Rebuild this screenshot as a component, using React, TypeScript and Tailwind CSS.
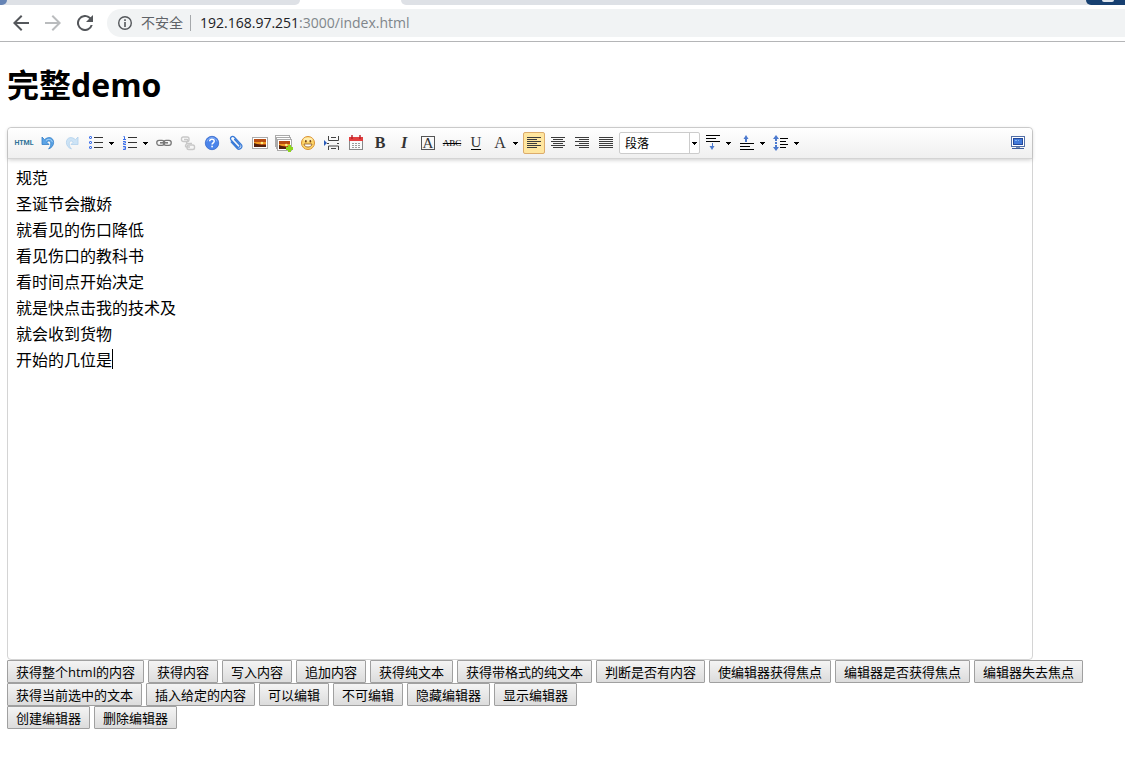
import React from "react";

const iconClass = "block h-4 w-4 shrink-0";

function Svg({ children, className = iconClass, viewBox = "0 0 16 16" }: { children: React.ReactNode; className?: string; viewBox?: string }) {
  return (
    <svg className={className} viewBox={viewBox} fill="none" aria-hidden="true">
      {children}
    </svg>
  );
}

function Caret() {
  return (
    <svg className="block h-[3px] w-[5px] shrink-0" viewBox="0 0 5 3" aria-hidden="true">
      <path d="M0 0h5v1H4v1H3v1H2V2H1V1H0z" fill="#000" />
    </svg>
  );
}

function Tool({ label, active = false, children }: { label: string; active?: boolean; children: React.ReactNode }) {
  return (
    <button type="button" title={label} aria-label={label} className="flex h-[22px] w-6 shrink-0 items-center justify-center">
      {active ? (
        <span className="flex h-[22px] w-[22px] items-center justify-center rounded-[2px] border border-[#dcac6c] bg-[#ffe69f]">{children}</span>
      ) : (
        children
      )}
    </button>
  );
}

function MenuTool({ label, children }: { label: string; children: React.ReactNode }) {
  return (
    <button type="button" title={label} aria-label={label} aria-haspopup="menu" className="flex h-[22px] w-[34px] shrink-0 items-center justify-between pl-1 pr-1">
      {children}
      <Caret />
    </button>
  );
}

function Lines({ rows }: { rows: [number, number][] }) {
  return (
    <Svg>
      {rows.map(([x, w], i) => (
        <rect key={i} x={x} y={2 + i * 2} width={w} height="1" fill="#3c3c3c" />
      ))}
    </Svg>
  );
}

const LEFT: [number, number][] = [[1, 14], [1, 10], [1, 14], [1, 10], [1, 14], [1, 10]];
const CENTER: [number, number][] = [[1, 14], [3, 10], [1, 14], [3, 10], [1, 14], [3, 10]];
const RIGHT: [number, number][] = [[1, 14], [5, 10], [1, 14], [5, 10], [1, 14], [5, 10]];
const JUSTIFY: [number, number][] = [[1, 14], [1, 14], [1, 14], [1, 14], [1, 14], [1, 14]];

function UndoIcon() {
  return (
    <Svg>
      <path d="M2 2v7.5h7L6.8 7.2C8.6 5 11 6 10.8 9c-.1 2-1 3.5-2.2 5 3.2-1.3 5-3.7 5-6.6 0-5.2-5.7-6.3-9-2.7z" fill="#5ca4e6" stroke="#347fc8" strokeWidth=".8" />
      <path d="M6 5.6c2.4-2.2 5.6-1.4 6.3 1.3" stroke="#a9d4f8" strokeWidth="1" />
    </Svg>
  );
}

function RedoIcon() {
  return (
    <Svg>
      <path d="M14 2v7.5H7l2.2-2.3C7.4 5 5 6 5.2 9c.1 2 1 3.500 2.200 5-3.200-1.300-5-3.700-5-6.600 0-5.200 5.700-6.300 9-2.700z" fill="#cde3f5" stroke="#b1d1ec" strokeWidth=".8" />
    </Svg>
  );
}

function BulletIcon() {
  return (
    <Svg>
      {[1.5, 6.5, 11.5].map((y) => (
        <g key={y}>
          <rect x="1.5" y={y} width="2" height="2" rx=".5" stroke="#3d70ea" />
          <rect x="6" y={y + 0.5} width="9" height="1" fill="#333" />
        </g>
      ))}
    </Svg>
  );
}

function NumberIcon() {
  return (
    <Svg>
      <path d="M1.5 1.500h1v3M1 4.500h3M1 6.500h2.500v1.500h-2v1.500H4M1 11.500h2.500v3H1M1.500 13H3.500" stroke="#3d70ea" />
      <path d="M6 2.500h9M6 7.500h9M6 12.500h9" stroke="#333" />
    </Svg>
  );
}

function LinkIcon() {
  return (
    <Svg>
      <rect x=".8" y="5.3" width="7.4" height="5" rx="2.2" stroke="#767676" strokeWidth="1.3" />
      <rect x="7.8" y="5.3" width="7.4" height="5" rx="2.2" stroke="#767676" strokeWidth="1.3" />
      <path d="M4 7.800h8" stroke="#767676" strokeWidth="1.5" />
    </Svg>
  );
}

function UnlinkIcon() {
  return (
    <Svg>
      <rect x="1.5" y="2" width="7.500" height="4.500" rx="1.800" stroke="#c8c8c8" strokeWidth="1.400" />
      <rect x="7" y="10" width="7.500" height="4.500" rx="1.800" stroke="#c8c8c8" strokeWidth="1.400" />
      <path d="M4 4.500h3c2 0 0 3-1 3.500M10 12H6.500c-2 0-1-3.500 1.500-3.500h4" stroke="#c8c8c8" strokeWidth="1.300" />
    </Svg>
  );
}

function HelpIcon() {
  return (
    <Svg>
      <circle cx="8" cy="8" r="6.7" fill="#4b84ea" stroke="#3568ca" strokeWidth=".8" />
      <path d="M3 6.500C4 1.500 12 1.500 13 6.500" stroke="#89b1f6" />
      <path d="M5.700 6.300C5.700 3.400 10.300 3.500 10.200 6.200c0 1.600-2.100 1.600-2.100 3.300" stroke="#fff" strokeWidth="1.5" />
      <rect x="7.3" y="10.7" width="1.6" height="1.6" fill="#fff" />
    </Svg>
  );
}

function ClipIcon() {
  return (
    <Svg>
      <g transform="rotate(-43 8 8)" stroke="#397bd8" strokeWidth="1.3" strokeLinecap="round">
        <path d="M5.200 4v8.500c0 3.700 5.600 3.700 5.600 0V2.700c0-3.200-4.400-3.200-4.400 0v9c0 2 3 2 3 0V4.500" />
      </g>
    </Svg>
  );
}

function Photo({ x, y, w, h }: { x: number; y: number; w: number; h: number }) {
  return (
    <g>
      <rect x={x + 0.5} y={y + 0.5} width={w - 1} height={h - 1} fill="#fff" stroke="#aaa" />
      <rect x={x + 2} y={y + 2} width={w - 4} height={h - 4} fill="#b74b12" />
      <rect x={x + 2} y={y + h / 2 - 1} width={w - 4} height="2" fill="#f29a22" />
      <circle cx={x + w * 0.62} cy={y + h / 2} r="1.3" fill="#ffec83" />
      <path d={`M${x + 2} ${y + h / 2}l3 1 4 1h${w - 11}v${h / 2 - 4}h${4 - w}z`} fill="#54200c" />
    </g>
  );
}

function ImageIcon() {
  return (
    <Svg>
      <Photo x={0} y={2} w={16} h={12} />
    </Svg>
  );
}

function ImagesIcon() {
  return (
    <Svg className="block h-[18px] w-5 shrink-0" viewBox="0 0 20 18">
      <rect x="1.5" y="1.5" width="14" height="11" fill="#fff" stroke="#aaa" />
      <rect x="2.5" y="3.5" width="14" height="11" fill="#fff" stroke="#aaa" />
      <Photo x={3} y={5} w={15} h={12} />
      <path d="M14 11h3v2h2v3h-2v2h-3v-2h-2v-3h2z" fill="#8ed51e" />
    </Svg>
  );
}

function SmileIcon() {
  return (
    <Svg>
      <circle cx="8" cy="8" r="6.5" fill="#fdd568" stroke="#d89033" />
      <ellipse cx="8" cy="4.5" rx="4.5" ry="2" fill="#ffecad" />
      <rect x="5" y="5" width="1.7" height="2.5" rx=".8" fill="#754219" />
      <rect x="9.5" y="5" width="1.7" height="2.5" rx=".8" fill="#754219" />
      <path d="M4 9h8c-.4 4-7.600 4-8 0z" fill="#fff" stroke="#8c5420" strokeWidth=".8" />
    </Svg>
  );
}

function PageBreakIcon() {
  return (
    <Svg>
      <path d="M0 5l3 3-3 3z" fill="#285ab8" />
      <path d="M4.500 1v4.500h10V1M7 2.500h5M3 8.500h2M13 8.500h2M4.500 15v-4h10v4M7 13.500h5" stroke="#444" />
    </Svg>
  );
}

function CalendarIcon() {
  return (
    <Svg>
      <rect x="1.5" y="2.5" width="13" height="12" fill="#fafafa" stroke="#888" />
      <path d="M1 2h14v4H1z" fill="#e23e3e" />
      <path d="M4 0v4M12 0v4" stroke="#b51f29" strokeWidth="1.4" />
      <path d="M4 8h2v1H4zM7 8h2v1H7zM10 8h2v1h-2zM4 10h2v1H4zM7 10h2v1H7zM10 10h2v1h-2zM4 12h2v1H4zM7 12h2v1H7zM10 12h2v1h-2z" fill="#9b9b9b" />
    </Svg>
  );
}

function SpaceBeforeIcon() {
  return (
    <Svg>
      <path d="M1 .5h14M1 3.500h10M1 6.500h14" stroke="#000" />
      <path d="M6 8h1v3H4.500L7 15l2.500-4H8V8z" fill="#4b79ce" />
    </Svg>
  );
}

function SpaceAfterIcon() {
  return (
    <Svg>
      <path d="M1 8.500h14M1 11.500h10M1 14.500h14" stroke="#000" />
      <path d="M7 0L4.500 4H6v3h2V4h1.500z" fill="#4b79ce" />
    </Svg>
  );
}

function LineHeightIcon() {
  return (
    <Svg>
      <path d="M3 0L0 4h2v2h2V4h2zM2 7h2v2H2zM3 16l-3-4h2v-2h2v2h2z" fill="#4b79ce" />
      <path d="M7 3.500h8M7 6.500h6M7 9.500h8M7 12.500h6" stroke="#000" />
    </Svg>
  );
}

function ScreenIcon() {
  return (
    <Svg>
      <rect x="1.5" y="1.5" width="13" height="10" fill="#fff" stroke="#526fa7" />
      <rect x="3.5" y="3.5" width="9" height="6" fill="#437ad9" stroke="#24499b" />
      <path d="M5 5h2v1H5zM8 5h1v1H8z" fill="#7fb2f4" />
      <path d="M6 12h4v1H6z" fill="#7b8fae" />
      <path d="M2 13h12v1H2z" fill="#3b5c9c" />
    </Svg>
  );
}

const PARAGRAPHS = ["规范", "圣诞节会撒娇", "就看见的伤口降低", "看见伤口的教科书", "看时间点开始决定", "就是快点击我的技术及", "就会收到货物", "开始的几位是"];

const ACTIONS = [
  "获得整个html的内容", "获得内容", "写入内容", "追加内容", "获得纯文本", "获得带格式的纯文本", "判断是否有内容", "使编辑器获得焦点",
  "编辑器是否获得焦点", "编辑器失去焦点", "获得当前选中的文本", "插入给定的内容", "可以编辑", "不可编辑", "隐藏编辑器", "显示编辑器",
];

function ActionButton({ children }: { children: React.ReactNode }) {
  return (
    <button type="button" className="h-[23px] whitespace-nowrap rounded-[1px] border border-[#a0a0a0] bg-linear-to-b from-[#f4f4f4] to-[#dcdcdc] px-2 text-[13px] leading-[20px] text-black">
      {children}
    </button>
  );
}

function BrowserBar() {
  return (
    <header className="border-b border-[#b4b5b7] bg-white">
      <div className="flex h-[5px] overflow-hidden bg-white">
        <div className="w-[300px] rounded-br-[5px] bg-[#dee1e6]">
          <div className="h-[5px] w-[7px] rounded-br-[5px] bg-[#6684b5]" />
        </div>
        <div className="w-[101px]" />
        <div className="flex flex-1 justify-end rounded-bl-[5px] bg-[#dee1e6]">
          <div className="flex w-[39px] justify-center rounded-bl-[5px] bg-[#174071] pl-1">
            <div className="h-[2px] w-3 rounded-b-full bg-[#dfe6ee]" />
          </div>
        </div>
      </div>
      <div className="flex h-9 items-center">
        <nav className="flex shrink-0 items-center gap-4 pl-[13px]">
          <button type="button" aria-label="后退">
            <Svg viewBox="4 4 16 16"><path d="M20 11H7.830l5.590-5.590L12 4l-8 8 8 8 1.410-1.410L7.830 13H20z" fill="#54575b" /></Svg>
          </button>
          <button type="button" aria-label="前进">
            <Svg viewBox="4 4 16 16"><path d="M4 13h12.170l-5.590 5.590L12 20l8-8-8-8-1.410 1.410L16.170 11H4z" fill="#babcbe" /></Svg>
          </button>
          <button type="button" aria-label="重新加载">
            <Svg viewBox="4 4 16 16"><path d="M17.650 6.350A8 8 0 1 0 19.730 14h-2.080A6 6 0 1 1 12 6c1.660 0 3.140.69 4.220 1.780L13 11h7V4z" fill="#54575b" /></Svg>
          </button>
        </nav>
        <div className="ml-[14px] flex h-7 flex-1 items-center rounded-l-full bg-[#f1f3f4] pl-[10px] text-[14px] leading-[20px]">
          <button type="button" className="flex items-center gap-2 text-[#5f6368]">
            <Svg>
              <circle cx="8" cy="8" r="6.3" stroke="#54575b" strokeWidth="1.4" />
              <path d="M7.200 4.300h1.600v1.600H7.200zM7.200 7h1.600v5H7.200z" fill="#54575b" />
            </Svg>
            不安全
          </button>
          <span className="ml-[7px] h-4 w-px bg-[#a5a8ab]" />
          <div role="textbox" aria-label="地址" className="ml-[9px] text-[#80868b]">
            <span className="text-[#202124]">192.168.97.251</span>:3000/index.html
          </div>
        </div>
      </div>
    </header>
  );
}

export default function App() {
  return (
    <div className="min-h-screen bg-white font-['Open_Sans','Noto_Sans_CJK_SC',sans-serif] text-black">
      <BrowserBar />
      <main className="px-[7px] pb-8 pt-[21px]">
        <h1 className="mb-[21px] text-[32px] font-bold leading-[43px]">完整demo</h1>

        <section aria-label="编辑器" className="w-full max-w-[1026px] rounded-[4px] border border-[#d4d4d4]">
          <div role="toolbar" aria-label="格式" className="flex items-center rounded-t-[4px] border-b border-[#d4d4d4] bg-linear-to-b from-white to-[#f0f0f0] py-1 pl-1 pr-[2px] font-['Liberation_Serif',serif] text-[#333] shadow-[0_1px_4px_rgba(0,0,0,0.2)]">
            <Tool label="源代码"><span className="font-['Roboto',sans-serif] text-[7px] font-bold leading-[8px] text-[#2f7297]">HTML</span></Tool>
            <Tool label="撤销"><UndoIcon /></Tool>
            <Tool label="重做"><RedoIcon /></Tool>
            <MenuTool label="无序列表"><BulletIcon /></MenuTool>
            <MenuTool label="有序列表"><NumberIcon /></MenuTool>
            <Tool label="超链接"><LinkIcon /></Tool>
            <Tool label="取消链接"><UnlinkIcon /></Tool>
            <Tool label="帮助"><HelpIcon /></Tool>
            <Tool label="附件"><ClipIcon /></Tool>
            <Tool label="单图上传"><ImageIcon /></Tool>
            <Tool label="多图上传"><ImagesIcon /></Tool>
            <Tool label="表情"><SmileIcon /></Tool>
            <Tool label="分页"><PageBreakIcon /></Tool>
            <Tool label="日期"><CalendarIcon /></Tool>
            <Tool label="加粗"><span className="text-[16px] font-bold leading-[16px]">B</span></Tool>
            <Tool label="斜体"><span className="text-[16px] font-bold italic leading-[16px]">I</span></Tool>
            <Tool label="字符边框"><span className="flex h-[14px] w-[14px] items-center justify-center border border-[#555] text-[15px] leading-[14px]">A</span></Tool>
            <Tool label="删除线"><span className="text-[9px] leading-[14px] text-black line-through">ABC</span></Tool>
            <Tool label="下划线"><span className="border-b border-black text-[15px] leading-[13px]">U</span></Tool>
            <MenuTool label="字体颜色"><span className="w-4 text-center text-[16px] leading-[16px]">A</span></MenuTool>
            <Tool label="居左对齐" active><Lines rows={LEFT} /></Tool>
            <Tool label="居中对齐"><Lines rows={CENTER} /></Tool>
            <Tool label="居右对齐"><Lines rows={RIGHT} /></Tool>
            <Tool label="两端对齐"><Lines rows={JUSTIFY} /></Tool>
            <div className="relative mx-px h-[22px] w-[81px] shrink-0">
              <select aria-label="段落格式" defaultValue="p" className="block h-[22px] w-full appearance-none rounded-[2px] border border-[#ccc] bg-white pl-[5px] pr-3 pt-px font-['Open_Sans','Noto_Sans_CJK_SC',sans-serif] text-[12px] leading-[19px] text-black">
                <option value="p">段落</option>
              </select>
              <span className="pointer-events-none absolute inset-y-px right-px flex w-[10px] items-center justify-center border-l border-[#ccc]"><Caret /></span>
            </div>
            <MenuTool label="段前距"><SpaceBeforeIcon /></MenuTool>
            <MenuTool label="段后距"><SpaceAfterIcon /></MenuTool>
            <MenuTool label="行间距"><LineHeightIcon /></MenuTool>
            <div className="ml-auto"><Tool label="全屏"><ScreenIcon /></Tool></div>
          </div>
          <div role="textbox" aria-multiline="true" aria-label="正文" contentEditable suppressContentEditableWarning spellCheck={false} className="min-h-[500px] px-2 py-[6px] text-[16px] leading-[26px] outline-none">
            {PARAGRAPHS.map((text, i) => (
              <p key={text}>
                {text}
                {i === PARAGRAPHS.length - 1 && <span className="mt-[2px] inline-block h-5 w-px bg-black align-top" />}
              </p>
            ))}
          </div>
        </section>

        <div className="flex flex-wrap gap-x-1">
          {ACTIONS.map((label) => <ActionButton key={label}>{label}</ActionButton>)}
        </div>
        <div className="flex flex-wrap gap-x-1">
          <ActionButton>创建编辑器</ActionButton>
          <ActionButton>删除编辑器</ActionButton>
        </div>
      </main>
    </div>
  );
}
